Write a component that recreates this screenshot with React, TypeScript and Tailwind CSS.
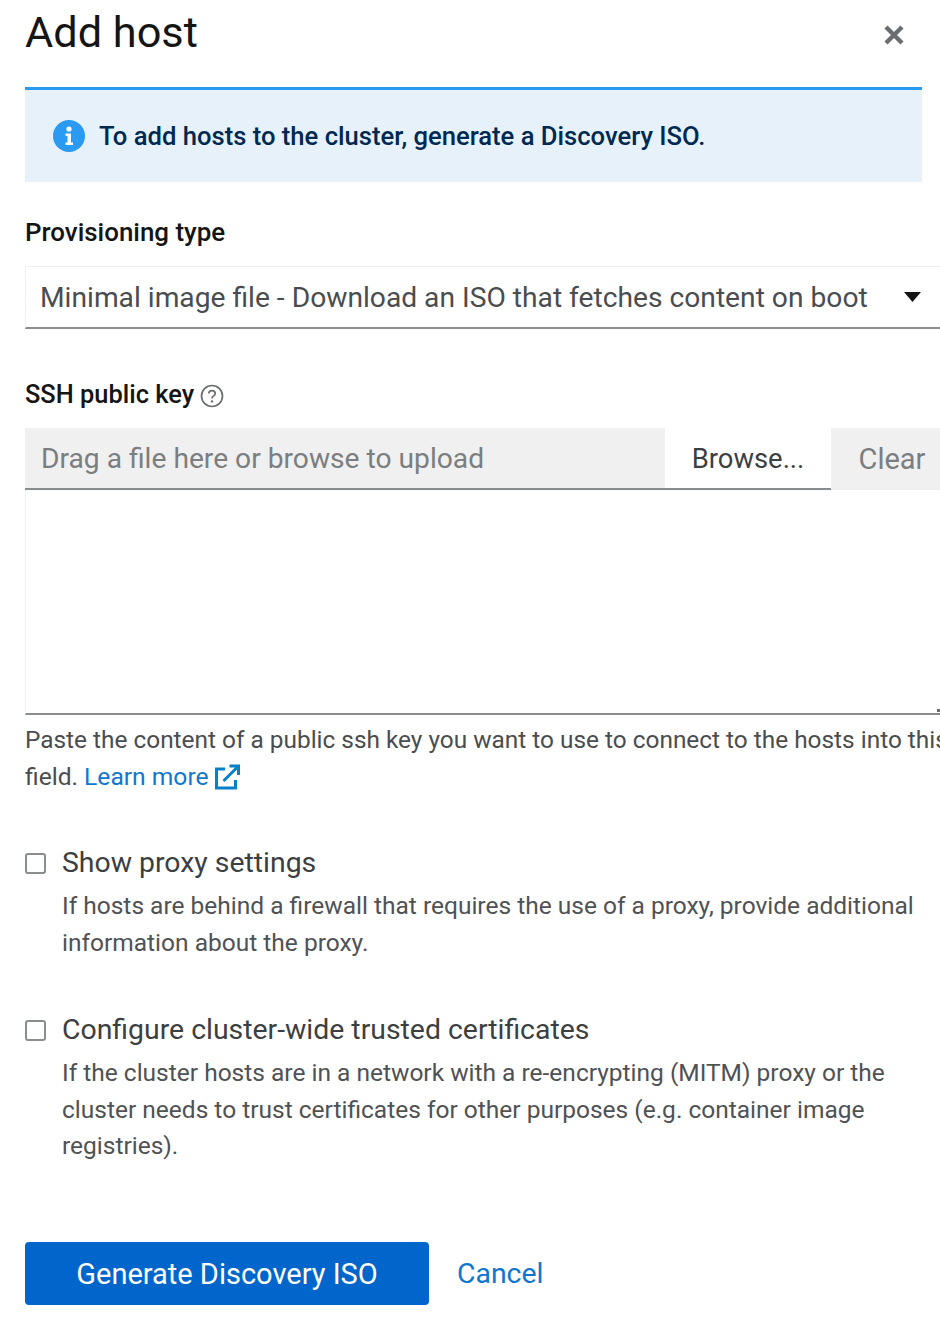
import React from "react";

function Check({ title, lines }: { title: string; lines: string[] }) {
  return (
    <div className="flex">
      <div className="w-[37px] shrink-0 pt-[9px]">
        <div className="w-[21px] h-[21px] rounded-[3px] border-2 border-[#8a8d90] bg-white" />
      </div>
      <div>
        <div className="text-[28.4px] leading-[38px] text-[#3c3f42]">{title}</div>
        <div className="mt-[6px] text-[24.5px] leading-[36.5px] text-[#4f5255]">
          {lines.map((l) => (
            <div key={l} className="whitespace-nowrap">{l}</div>
          ))}
        </div>
      </div>
    </div>
  );
}

export default function App() {
  return (
    <div className="w-[940px] h-[1320px] overflow-hidden bg-white pl-[25px] font-['Roboto',sans-serif]">
      <div className="w-[897px] h-[87px] flex justify-between items-start">
        <h1 className="text-[43.3px] leading-[65px] text-[#151515]">Add host</h1>
        <svg className="mt-[23px] mr-[16px]" width="24" height="24" viewBox="0 0 24 24" aria-hidden="true">
          <path d="M4 4 L20 20 M20 4 L4 20" stroke="#6a6e73" strokeWidth="4.4" fill="none" />
        </svg>
      </div>

      <div className="w-[897px] h-[95px] border-t-[3px] border-[#2b9af3] bg-[#e7f1fa] flex items-center pl-[28px] gap-[14px]">
        <svg width="32" height="32" viewBox="0 0 32 32" aria-hidden="true">
          <circle cx="16" cy="16" r="16" fill="#2b9af3" />
          <circle cx="16" cy="9" r="2.6" fill="#fff" />
          <path d="M12.5 13.5h5.5v9h2v2.5h-7.5v-2.5h2v-6.5h-2z" fill="#fff" />
        </svg>
        <span className="text-[25.6px] font-medium text-[#002952] whitespace-nowrap">To add hosts to the cluster, generate a Discovery ISO.</span>
      </div>

      <div className="mt-[31px] text-[25.9px] leading-[38px] font-medium text-[#151515]">Provisioning type</div>

      <div className="mt-[15px] w-[940px] h-[63px] border border-[#f0f0f0] border-b-2 border-b-[#8a8d90] flex items-center pl-[14px]">
        <span className="w-[864px] pt-[3px] text-[28.2px] text-[#4a4d50] whitespace-nowrap">Minimal image file - Download an ISO that fetches content on boot</span>
        <svg width="17" height="10" viewBox="0 0 17 10" aria-hidden="true">
          <path d="M0 0h17l-8.5 10z" fill="#151515" />
        </svg>
      </div>

      <div className="mt-[46px] flex items-center gap-[6px]">
        <span className="text-[25.4px] leading-[38px] font-medium text-[#151515]">SSH public key</span>
        <svg className="mt-[3px]" width="24" height="24" viewBox="0 0 24 24" fill="none" aria-hidden="true">
          <circle cx="12" cy="12" r="10.5" stroke="#6a6e73" strokeWidth="1.7" />
          <path d="M8.8 9.6c0-1.9 1.4-3 3.2-3s3.2 1.1 3.2 2.8c0 2.6-3.2 2.4-3.2 5" stroke="#6a6e73" strokeWidth="1.7" />
          <circle cx="12" cy="17.4" r="1.2" fill="#6a6e73" />
        </svg>
      </div>

      <div className="mt-[15px] w-[940px] flex h-[62px]">
        <div className="w-[640px] bg-[#f0f0f0] border-b-2 border-[#8a8d90] pl-[16px] pt-[2px] flex items-center text-[28.2px] text-[#7b7e81] whitespace-nowrap">Drag a file here or browse to upload</div>
        <div className="w-[166px] bg-white border-b-2 border-[#8a8d90] pt-[3px] flex items-center justify-center text-[27.4px] text-[#3c3f42]">Browse...</div>
        <div className="w-[109px] bg-[#f0f0f0] pt-[2px] pl-[13px] flex items-center justify-center text-[29px] text-[#7b7e81]">Clear</div>
      </div>

      <div className="relative w-[915px] h-[225px] border-l border-[#f0f0f0] border-b-2 border-b-[#8a8d90]">
        <span className="absolute right-0 bottom-[1px] w-[3px] h-[3px] bg-[#6a6e73]" />
      </div>

      <div className="mt-[6px] w-[915px] overflow-hidden text-[24.4px] leading-[37px] text-[#4a4d50] whitespace-nowrap">Paste the content of a public ssh key you want to use to connect to the hosts into this</div>
      <div className="flex items-center text-[24.6px] leading-[37px] text-[#4a4d50] whitespace-nowrap">
        <span>field.&nbsp;</span>
        <span className="text-[#0f76d0]">Learn more</span>
        <svg className="ml-[5px]" width="26" height="26" viewBox="0 0 26 26" fill="none" aria-hidden="true">
          <path d="M11 5H2.5v19h19v-8" stroke="#0780c8" strokeWidth="3" />
          <path d="M9.5 17L23 3.5M15.5 2h9v9" stroke="#0780c8" strokeWidth="3" />
        </svg>
      </div>

      <div className="mt-[49px]">
        <Check title="Show proxy settings" lines={["If hosts are behind a firewall that requires the use of a proxy, provide additional", "information about the proxy."]} />
      </div>
      <div className="mt-[50px]">
        <Check title="Configure cluster-wide trusted certificates" lines={["If the cluster hosts are in a network with a re-encrypting (MITM) proxy or the", "cluster needs to trust certificates for other purposes (e.g. container image", "registries)."]} />
      </div>

      <div className="mt-[77px] flex items-center gap-[28px]">
        <button className="w-[404px] h-[63px] pt-[3px] rounded-[4px] bg-[#0066cc] text-white text-[29px]">Generate Discovery ISO</button>
        <span className="pt-[3px] text-[28.4px] text-[#0f76d0]">Cancel</span>
      </div>
    </div>
  );
}
